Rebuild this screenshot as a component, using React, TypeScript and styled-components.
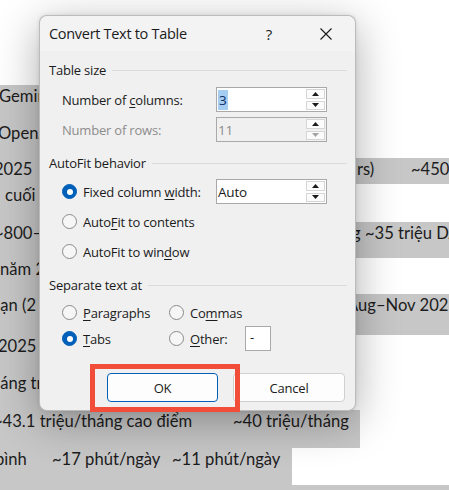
import React from 'react'
import styled, { createGlobalStyle } from 'styled-components'

const GlobalStyle = createGlobalStyle`
    html, body {
        margin: 0;
        padding: 0;
        background: #ffffff;
    }
`

type Cell = { w: number; indent?: number; t: string }
type Line = { h: number; sel: number; cells: Cell[] }

// document text behind the dialog, tab columns as fixed widths
const lines: Line[] = [
    { h: 37, sel: 300, cells: [{ w: 60, indent: -1, t: 'Gemini' }] },
    { h: 36, sel: 300, cells: [{ w: 60, indent: -2, t: 'OpenAI' }] },
    {
        h: 26,
        sel: 449,
        cells: [
            { w: 356, indent: -6, t: '2025' },
            { w: 54, indent: 1, t: 'rs)' },
            { w: 39, indent: 1, t: '~450' },
        ],
    },
    { h: 38, sel: 300, cells: [{ w: 60, indent: 5, t: 'cuối' }] },
    {
        h: 36,
        sel: 449,
        cells: [
            { w: 356, indent: -6, t: '~800–' },
            { w: 93, indent: -4, t: 'g ~35 triệu DA' },
        ],
    },
    { h: 36, sel: 300, cells: [{ w: 60, indent: 0, t: 'năm 2' }] },
    {
        h: 41,
        sel: 449,
        cells: [
            { w: 356, indent: -9, t: 'hạn (2' },
            { w: 93, indent: -9, t: 'Aug–Nov 2025' },
        ],
    },
    { h: 37, sel: 300, cells: [{ w: 60, indent: -2, t: '2025' }] },
    { h: 38, sel: 300, cells: [{ w: 60, indent: -15, t: 'tháng tr' }] },
    {
        h: 38,
        sel: 360,
        cells: [
            { w: 233, indent: -7, t: '~43.1 triệu/tháng cao điểm' },
            { w: 127, t: '~40 triệu/tháng' },
        ],
    },
    {
        h: 37,
        sel: 292,
        cells: [
            { w: 52, indent: -5, t: 'bình' },
            { w: 120, t: '~17 phút/ngày' },
            { w: 120, t: '~11 phút/ngày' },
        ],
    },
    { h: 37, sel: 449, cells: [] },
]

function Arrow({ down, off }: { down?: boolean; off?: boolean }) {
    return (
        <svg width="7" height="4" viewBox="0 0 7 4">
            <path d={down ? 'M0 0 L7 0 L3.5 4 Z' : 'M0 4 L7 4 L3.5 0 Z'} fill={off ? '#a3a3a3' : '#1a1a1a'} />
        </svg>
    )
}

function SpinField({ value, disabled, picked }: { value: string; disabled?: boolean; picked?: boolean }) {
    return (
        <SpinBox $disabled={disabled}>
            <Value $disabled={disabled}>{picked ? <Picked>{value}</Picked> : value}</Value>
            <Spin>
                <SpinBtn>
                    <Arrow />
                </SpinBtn>
                <SpinBtn>
                    <Arrow down off={disabled} />
                </SpinBtn>
            </Spin>
        </SpinBox>
    )
}

function App() {
    return (
        <>
            <GlobalStyle />
            <Screen>
                <Doc>
                    {lines.map((line, i) => (
                        <Row key={i} $h={line.h}>
                            <Sel $w={line.sel}>
                                {line.cells.map((c, j) => (
                                    <DocCell key={j} $w={c.w} $indent={c.indent ?? 0}>
                                        {c.t}
                                    </DocCell>
                                ))}
                            </Sel>
                        </Row>
                    ))}
                </Doc>

                <Dialog>
                    <TitleBar>
                        <Title>Convert Text to Table</Title>
                        <HelpBtn>?</HelpBtn>
                        <CloseBtn>
                            <svg width="12" height="12" viewBox="0 0 12 12">
                                <path d="M0.5 0.5 L11.5 11.5 M11.5 0.5 L0.5 11.5" stroke="#1a1a1a" strokeWidth="1.1" />
                            </svg>
                        </CloseBtn>
                    </TitleBar>
                    <Body>
                        <GroupHeader $top={9}>Table size</GroupHeader>
                        <FieldRow $top={7}>
                            <Label>
                                Number of <U>c</U>olumns:
                            </Label>
                            <SpinField value="3" picked />
                        </FieldRow>
                        <FieldRow $top={5}>
                            <Label $disabled>Number of rows:</Label>
                            <SpinField value="11" disabled />
                        </FieldRow>

                        <GroupHeader $top={11}>AutoFit behavior</GroupHeader>
                        <FieldRow $top={6}>
                            <Option $w={154}>
                                <Radio $on />
                                <span>
                                    Fixed column <U>w</U>idth:
                                </span>
                            </Option>
                            <SpinField value="Auto" />
                        </FieldRow>
                        <FieldRow $top={5}>
                            <Option>
                                <Radio />
                                <span>
                                    Auto<U>F</U>it to contents
                                </span>
                            </Option>
                        </FieldRow>
                        <FieldRow $top={5}>
                            <Option>
                                <Radio />
                                <span>
                                    AutoFit to win<U>d</U>ow
                                </span>
                            </Option>
                        </FieldRow>

                        <GroupHeader $top={11}>Separate text at</GroupHeader>
                        <FieldRow $top={5}>
                            <Option $w={107}>
                                <Radio />
                                <span>
                                    <U>P</U>aragraphs
                                </span>
                            </Option>
                            <Option>
                                <Radio />
                                <span>
                                    Co<U>m</U>mas
                                </span>
                            </Option>
                        </FieldRow>
                        <FieldRow $top={1}>
                            <Option $w={107}>
                                <Radio $on />
                                <span>
                                    <U>T</U>abs
                                </span>
                            </Option>
                            <Option $w={76}>
                                <Radio />
                                <span>
                                    <U>O</U>ther:
                                </span>
                            </Option>
                            <OtherBox>-</OtherBox>
                        </FieldRow>

                        <Buttons>
                            <Button $primary>OK</Button>
                            <Button $w={112}>Cancel</Button>
                        </Buttons>
                    </Body>
                </Dialog>

                <Callout />
            </Screen>
        </>
    )
}

export default App

const Screen = styled.div`
    position: relative;
    width: 449px;
    height: 490px;
    overflow: hidden;
    background: #ffffff;
`

const Doc = styled.div`
    padding-top: 85px;
    font-family: Lato, 'Liberation Sans', sans-serif;
    font-size: 16.6px;
    line-height: 23px;
    color: #1c1c1c;
`

const Row = styled.div<{ $h: number }>`
    display: flex;
    height: ${(p) => p.$h}px;
`

const Sel = styled.div<{ $w: number }>`
    display: flex;
    flex: none;
    width: ${(p) => p.$w}px;
    height: 100%;
    background: #c7c7c7;
    overflow: hidden;
`

const DocCell = styled.span<{ $w: number; $indent: number }>`
    flex: 0 0 ${(p) => p.$w}px;
    overflow: hidden;
    white-space: nowrap;
    text-indent: ${(p) => p.$indent}px;
`

const Dialog = styled.div`
    position: absolute;
    left: 39px;
    top: 15px;
    width: 317px;
    height: 396px;
    box-sizing: border-box;
    display: flex;
    flex-direction: column;
    background: #f0f0f0;
    border: 1px solid rgba(0, 0, 0, 0.22);
    border-radius: 8px;
    box-shadow: 0 10px 44px rgba(0, 0, 0, 0.32), 0 0 4px rgba(0, 0, 0, 0.1);
    font-family: 'Segoe UI', 'Open Sans', sans-serif;
    font-size: 13px;
    letter-spacing: -0.2px;
    color: #1b1b1b;
`

const TitleBar = styled.div`
    display: flex;
    align-items: center;
    height: 35px;
    padding-left: 9px;
    padding-right: 6px;
    background: #f3f3f3;
    border-radius: 8px 8px 0 0;
`

const Title = styled.div`
    flex: 1;
    font-size: 14.5px;
    letter-spacing: -0.3px;
`

const HelpBtn = styled.div`
    width: 40px;
    margin-right: 14px;
    text-align: center;
    font-size: 15px;
`

const CloseBtn = styled.div`
    display: flex;
    align-items: center;
    justify-content: center;
    width: 46px;
    height: 35px;
`

const Body = styled.div`
    display: flex;
    flex-direction: column;
    padding: 0 8px 0 9px;
`

const GroupHeader = styled.div<{ $top: number }>`
    display: flex;
    align-items: center;
    gap: 6px;
    height: 20px;
    margin-top: ${(p) => p.$top}px;
    white-space: nowrap;

    &::after {
        content: '';
        flex: 1;
        height: 1px;
        background: #dadada;
    }
`

const FieldRow = styled.div<{ $top: number }>`
    display: flex;
    align-items: center;
    height: 25px;
    margin-top: ${(p) => p.$top}px;
    padding-left: 13px;
`

const Label = styled.div<{ $disabled?: boolean }>`
    width: 154px;
    flex: none;
    color: ${(p) => (p.$disabled ? '#8c8c8c' : 'inherit')};
`

const U = styled.span`
    text-decoration: underline;
    text-underline-offset: 2px;
    text-decoration-thickness: 1px;
`

const SpinBox = styled.div<{ $disabled?: boolean }>`
    display: flex;
    width: 111px;
    height: 25px;
    box-sizing: border-box;
    border: 1px solid #a9a9a9;
    background: ${(p) => (p.$disabled ? '#f0f0f0' : '#ffffff')};
`

const Value = styled.div<{ $disabled?: boolean }>`
    flex: 1;
    display: flex;
    align-items: center;
    padding-left: 1px;
    font-size: 13.5px;
    color: ${(p) => (p.$disabled ? '#8c8c8c' : '#1b1b1b')};
`

const Picked = styled.span`
    background: #a5cdf1;
    color: #0d2f66;
    padding: 1px 1px;
`

const Spin = styled.div`
    display: flex;
    flex-direction: column;
    gap: 2px;
    width: 19px;
    padding: 1px 1px 1px 0;
`

const SpinBtn = styled.div`
    flex: 1;
    display: flex;
    align-items: center;
    justify-content: center;
    box-sizing: border-box;
    border: 1px solid #d6d6d6;
    background: #fbfbfb;
`

const Option = styled.label<{ $w?: number }>`
    display: flex;
    align-items: center;
    gap: 6px;
    flex: none;
    width: ${(p) => (p.$w ? `${p.$w}px` : 'auto')};
    white-space: nowrap;
`

const Radio = styled.span<{ $on?: boolean }>`
    display: flex;
    align-items: center;
    justify-content: center;
    width: 15px;
    height: 15px;
    box-sizing: border-box;
    border-radius: 50%;
    border: 1px solid ${(p) => (p.$on ? '#005fb8' : '#8a8a8a')};
    background: ${(p) => (p.$on ? '#005fb8' : '#f6f6f6')};

    &::after {
        content: '';
        display: ${(p) => (p.$on ? 'block' : 'none')};
        width: 6px;
        height: 6px;
        border-radius: 50%;
        background: #ffffff;
    }
`

const OtherBox = styled.div`
    width: 26px;
    height: 25px;
    box-sizing: border-box;
    border: 1px solid #a9a9a9;
    background: #ffffff;
    padding-left: 4px;
    line-height: 21px;
`

const Buttons = styled.div`
    display: flex;
    justify-content: flex-end;
    gap: 15px;
    margin-top: 22px;
    padding-right: 2px;
`

const Button = styled.button<{ $primary?: boolean; $w?: number }>`
    width: ${(p) => p.$w ?? 111}px;
    height: 29px;
    box-sizing: border-box;
    border: 1px solid ${(p) => (p.$primary ? '#005fb8' : '#d0d0d0')};
    border-radius: 4px;
    background: #fdfdfd;
    font-family: inherit;
    font-size: 13px;
    letter-spacing: -0.2px;
    color: #1b1b1b;
    padding: 0;
`

const Callout = styled.div`
    position: absolute;
    left: 90px;
    top: 364px;
    width: 150px;
    height: 48px;
    box-sizing: border-box;
    border: 5px solid #f14d38;
`
